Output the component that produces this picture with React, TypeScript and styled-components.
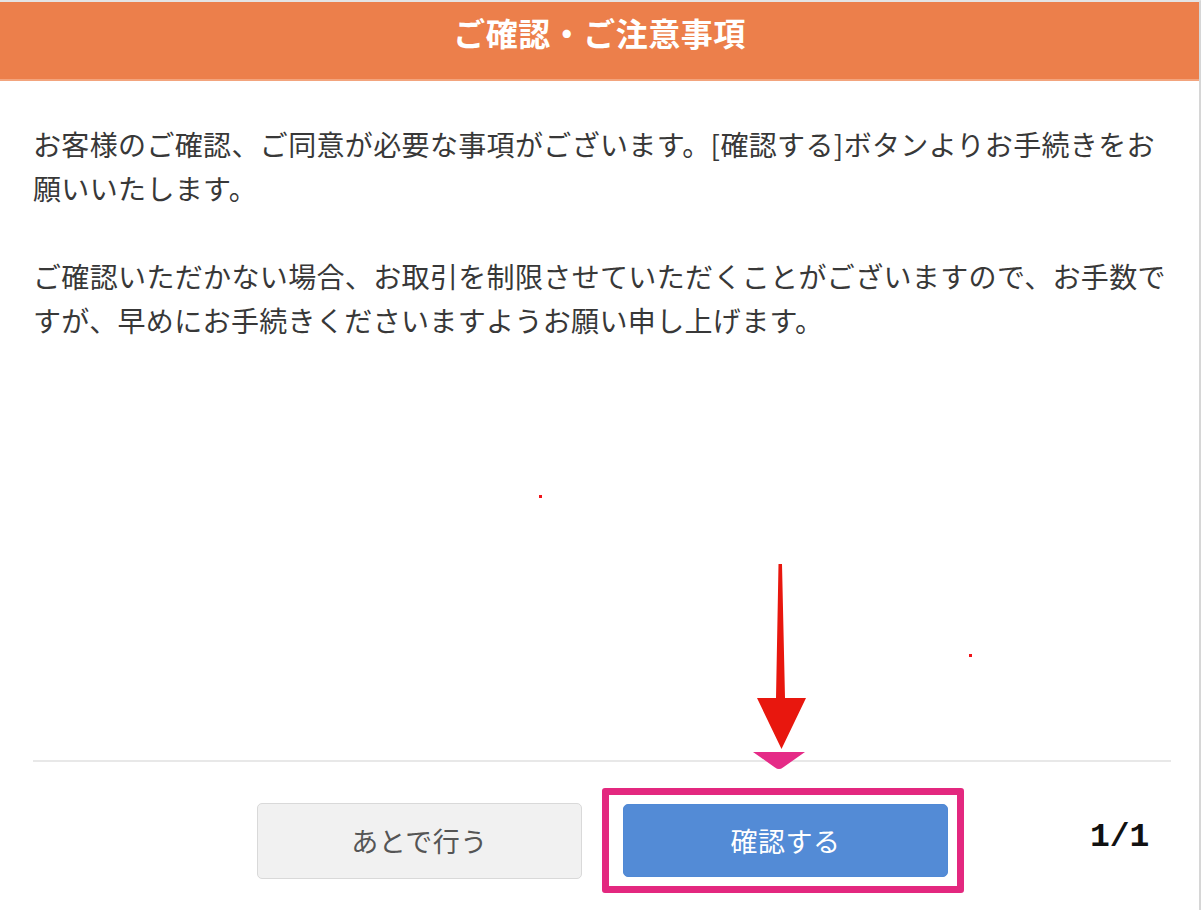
import React from 'react';
import styled, { createGlobalStyle } from 'styled-components';

const GlobalStyle = createGlobalStyle`
  html, body {
    margin: 0;
    padding: 0;
    background: #ffffff;
  }
  body {
    font-family: 'Noto Sans CJK JP', 'Noto Sans', sans-serif;
  }
`;

const Page = styled.div`
  position: relative;
  width: 1202px;
  height: 910px;
  overflow: hidden;
  background: #ffffff;
`;

const Frame = styled.div`
  display: flex;
  flex-direction: column;
  box-sizing: border-box;
  width: 1201px;
  height: 910px;
  border-top: 2px solid #e4e4e4;
  border-right: 2px solid #d6d6d6;
`;

const Header = styled.header`
  box-sizing: border-box;
  height: 79px;
  padding-top: 11px;
  background: #ec7f4b;
  border-bottom: 2px solid #f3a47d;
  color: #ffffff;
  text-align: center;
  font-size: 32px;
  font-weight: 700;
  line-height: 38px;
  letter-spacing: 0.5px;
`;

const Body = styled.div`
  flex: 1;
  padding: 41px 30px 0 33px;
`;

const Paragraph = styled.p`
  margin: 0 0 44px;
  color: #383838;
  font-size: 28px;
  line-height: 44px;
  letter-spacing: 0.35px;
`;

const Divider = styled.hr`
  margin: 0 28px 0 33px;
  height: 2px;
  border: none;
  background: #e8e8e8;
`;

const Footer = styled.div`
  display: flex;
  align-items: flex-start;
  height: 148px;
  padding: 26px 0 0 257px;
  box-sizing: border-box;
`;

const Button = styled.button<{ $primary?: boolean }>`
  box-sizing: border-box;
  width: 325px;
  height: ${(p) => (p.$primary ? '73px' : '76px')};
  border-radius: 5px;
  border: 1px solid ${(p) => (p.$primary ? '#5089d5' : '#d9d9d9')};
  background: ${(p) => (p.$primary ? '#538bd6' : '#f1f1f1')};
  color: ${(p) => (p.$primary ? '#ffffff' : '#555555')};
  font-family: 'Noto Sans CJK JP', sans-serif;
  font-size: 27px;
  letter-spacing: 0.5px;
  cursor: pointer;
`;

const Actions = styled.div`
  display: flex;
  align-items: center;
`;

const Highlight = styled.div`
  display: flex;
  margin-left: 20px;
  padding: 9px 9px 9px 14px;
  border: 7px solid #e3287f;
  border-radius: 3px;
`;

const PageCount = styled.span`
  margin-left: 126px;
  margin-top: -6px;
  font-family: 'Liberation Mono', 'DejaVu Sans Mono', monospace;
  font-weight: 700;
  font-size: 33px;
  color: #111111;
`;

const Arrow = styled.svg`
  position: absolute;
  left: 755px;
  top: 563px;
`;

const Pointer = styled.svg`
  position: absolute;
  left: 753px;
  top: 752px;
`;

const Dot = styled.span<{ $x: number; $y: number }>`
  position: absolute;
  left: ${(p) => p.$x}px;
  top: ${(p) => p.$y}px;
  width: 3px;
  height: 3px;
  background: #f0141a;
`;

const App = () => {
  return (
    <Page>
      <GlobalStyle />
      <Frame>
        <Header>ご確認・ご注意事項</Header>
        <Body>
          <Paragraph>
            お客様のご確認、ご同意が必要な事項がございます。[確認する]ボタンよりお手続きをお願いいたします。
          </Paragraph>
          <Paragraph>
            ご確認いただかない場合、お取引を制限させていただくことがございますので、お手数ですが、早めにお手続きくださいますようお願い申し上げます。
          </Paragraph>
        </Body>
        <Divider />
        <Footer>
          <Actions>
            <Button>あとで行う</Button>
            <Highlight>
              <Button $primary>確認する</Button>
            </Highlight>
            <PageCount>1/1</PageCount>
          </Actions>
        </Footer>
      </Frame>

      <Arrow width="52" height="188" viewBox="0 0 52 188">
        <polygon
          points="23.5,1 27,1 30,135 51,135 26.5,186 2,135 21,135"
          fill="#e8170e"
        />
      </Arrow>
      <Pointer width="52" height="18" viewBox="0 0 52 18">
        <path d="M0 0 H52 L30 15.5 Q26 18.5 22 15.5 Z" fill="#e52b87" />
      </Pointer>
      <Dot $x={539} $y={495} />
      <Dot $x={969} $y={654} />
    </Page>
  );
};

export default App;
